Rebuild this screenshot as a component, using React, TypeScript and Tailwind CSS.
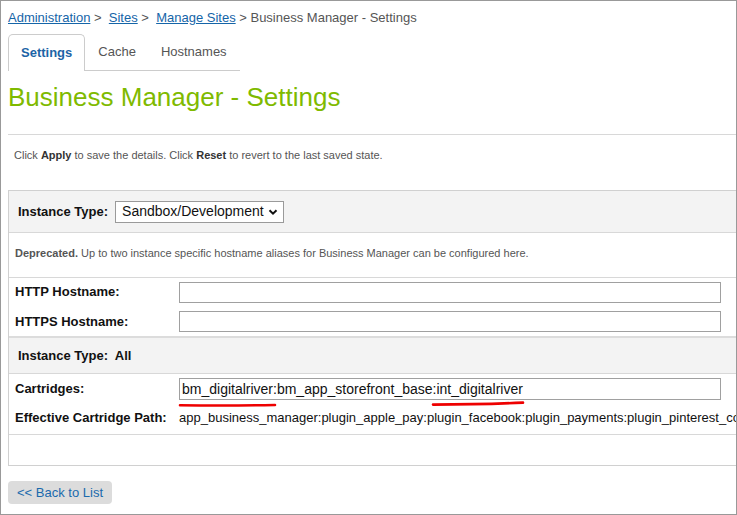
import React from "react";

const font = { fontFamily: '"Liberation Sans", Arial, sans-serif' };

export default function App() {
  return (
    <div
      className="w-[737px] h-[515px] border border-[#999] overflow-hidden bg-white relative"
      style={font}
    >
      <div className="pl-[7px]">
        {/* Breadcrumb */}
        <div className="pt-[9px] text-[13px] leading-[16px] text-[#555] whitespace-nowrap">
          <a className="text-[#1565a8] underline">Administration</a>
          <span> &gt;&nbsp; </span>
          <a className="text-[#1565a8] underline">Sites</a>
          <span> &gt;&nbsp; </span>
          <a className="text-[#1565a8] underline">Manage Sites</a>
          <span> &gt; Business Manager - Settings</span>
        </div>

        {/* Tabs */}
        <div className="mt-[8px] flex items-end h-[37px] text-[13px]">
          <div className="h-[37px] px-[12px] flex items-center border border-b-0 border-[#ccc] rounded-t-[5px] font-bold text-[#1c64a6]">
            Settings
          </div>
          <div className="h-[37px] flex items-center border-b border-[#ccc] text-[#555]">
            <span className="px-[13px]">Cache</span>
            <span className="pl-[12px] pr-[13px]">Hostnames</span>
          </div>
        </div>

        {/* Heading */}
        <h1 className="mt-[11px] text-[26px] leading-[30px] text-[#7fba00] whitespace-nowrap">
          Business Manager - Settings
        </h1>

        <div className="mt-[22px] border-t border-[#d8d8d8]" />

        <p className="mt-[14px] pl-[6px] text-[11px] leading-[13px] text-[#555] whitespace-nowrap">
          Click <b className="text-[#333]">Apply</b> to save the details. Click{" "}
          <b className="text-[#333]">Reset</b> to revert to the last saved state.
        </p>

        {/* Table */}
        <div className="mt-[28px] w-[780px] border border-[#d0d0d0] text-[13px] text-[#111]">
          <div className="h-[41px] bg-[#f3f3f3] flex items-center pl-[9px]">
            <span className="font-bold">Instance Type:</span>
            <div className="ml-[7px] h-[22px] w-[169px] border border-[#9a9a9a] bg-white flex items-center justify-between pl-[6px] pr-[4px] text-[14px] text-[#111]">
              <span>Sandbox/Development</span>
              <svg width="12" height="12" viewBox="0 0 12 12">
                <path d="M2.5 4.2 L6 7.7 L9.5 4.2" fill="none" stroke="#111" strokeWidth="2" />
              </svg>
            </div>
          </div>
          <div className="h-[45px] border-t border-[#d8d8d8] flex items-center pl-[6px] pb-[3px] text-[11px] text-[#555]">
            <span>
              <b>Deprecated.</b> Up to two instance specific hostname aliases for Business Manager can be configured here.
            </span>
          </div>
          <div className="border-t border-[#d8d8d8]">
            <div className="h-[29px] flex items-center pb-[1px]">
              <span className="w-[170px] pl-[6px] font-bold">HTTP Hostname:</span>
              <div className="h-[21px] w-[542px] border border-[#a0a0a0] bg-white" />
            </div>
            <div className="h-[29px] flex items-center">
              <span className="w-[170px] pl-[6px] font-bold">HTTPS Hostname:</span>
              <div className="h-[21px] w-[542px] border border-[#a0a0a0] bg-white" />
            </div>
          </div>
          <div className="h-[37px] border-t-2 border-[#dcdcdc] bg-[#f3f3f3] flex items-center pl-[9px] font-bold">
            Instance Type:&nbsp; All
          </div>
          <div className="border-t border-[#d8d8d8] pt-[4px]">
            <div className="h-[22px] flex items-center">
              <span className="w-[170px] pl-[6px] font-bold">Cartridges:</span>
              <div className="h-[22px] w-[542px] border border-[#a0a0a0] bg-white flex items-center pl-[2px] text-[14px] whitespace-nowrap overflow-hidden">
                bm_digitalriver:bm_app_storefront_base:int_digitalriver
              </div>
            </div>
            <div className="h-[34px] flex items-center pt-[2px]">
              <span className="w-[170px] pl-[6px] font-bold">Effective Cartridge Path:</span>
              <span className="whitespace-nowrap">
                app_business_manager:plugin_apple_pay:plugin_facebook:plugin_payments:plugin_pinterest_commerce
              </span>
            </div>
          </div>
          <div className="h-[31px] border-t border-[#d8d8d8]" />
        </div>

        {/* Button */}
        <div className="mt-[14px]">
          <button className="h-[23px] px-[9px] bg-[#dcdcdc] rounded-[4px] text-[13px] text-[#1a6aad]">
            &lt;&lt; Back to List
          </button>
        </div>
      </div>

      {/* Red annotation underlines */}
      <svg className="absolute left-0 top-0 pointer-events-none" width="737" height="515">
        <path d="M179 404.2 Q226 404.8 274 404" fill="none" stroke="#ee0000" strokeWidth="2.6" strokeLinecap="round" />
        <path d="M432 403.6 Q480 403.6 522 401.6" fill="none" stroke="#ee0000" strokeWidth="2.6" strokeLinecap="round" />
      </svg>
    </div>
  );
}
